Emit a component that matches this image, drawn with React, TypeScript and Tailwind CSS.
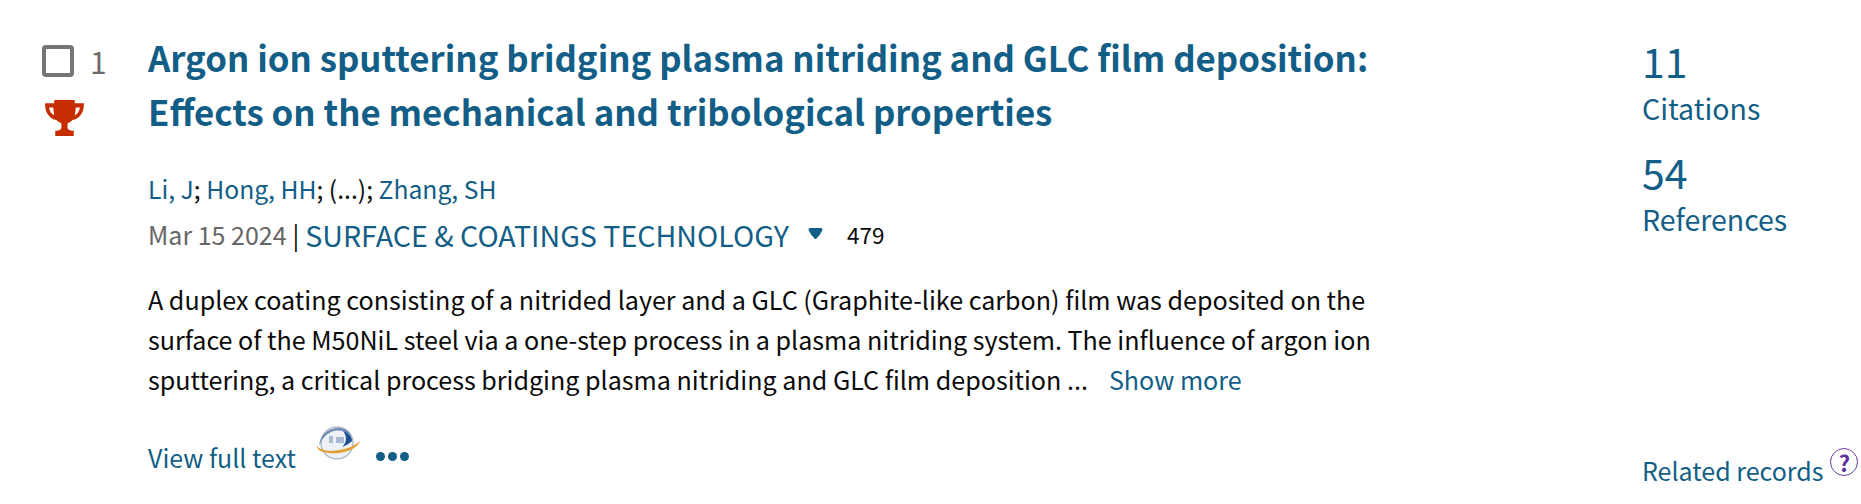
const font = { fontFamily: '"Noto Sans CJK SC", "Noto Sans", sans-serif' };

function Trophy() {
  return (
    <svg viewBox="0 0 40 36" className="w-[41px] h-[38px]" preserveAspectRatio="none" fill="#c62d00">
      <path d="M10 1h20v3h9c0 8-3 14-11 16-1.500 1.500-3.500 2.500-5 3v4c0 2 2 3 5 3h1v5H11v-5h1c3 0 5-1 5-3v-4c-1.500-.5-3.500-1.500-5-3C4 18 1 12 1 4h9V1zM5 8c.5 3.500 2 6 5 7.500C9.500 13 9.200 10.500 9 8H5zm30 0h-4c-.2 2.500-.5 5-1 7.500 3-1.500 4.500-4 5-7.500z" fillRule="evenodd" />
    </svg>
  );
}

function PublisherLogo() {
  return (
    <svg viewBox="0 0 44 36" className="w-[44px] h-[36px]">
      <circle cx="21" cy="17" r="16" fill="#eef2f7" stroke="#b4bcc9" strokeWidth="1.500" />
      <path d="M3 20C4 8 14 1 24 2c6 .5 10 4 11 8-5-5-13-7-20-4C9 9 5 14 3 20z" fill="#6d8db5" />
      <path d="M27 5c6 2 9 6 9 10-3 3-7 5-10 6 4-3 6-10 1-16z" fill="#1f4f94" />
      <path d="M1 19c1 5 12 7 22 5 9-1 17-5 21-9-1 5-9 10-20 12-11 1-20-1-22-4-1-1-1-3-1-4z" fill="#e3a032" />
      <rect x="13" y="10" width="4" height="7" fill="#a9bbd2" />
      <rect x="20" y="11" width="8" height="6" fill="#a9bbd2" />
    </svg>
  );
}

export default function App() {
  return (
    <div style={font} className="w-[1861px] h-[504px] bg-white flex overflow-hidden text-[#0a0a0a]">
      {/* checkbox + record number */}
      <div className="w-[148px] shrink-0 pl-[42px] pt-[45px] flex flex-col">
        <div className="flex items-center">
          <div className="w-[32px] h-[32px] rounded-[4px] border-[4px] border-[#757575]" />
          <span className="ml-[16px] text-[30px] leading-[32px] text-[#6b6b6b]">1</span>
        </div>
        <div className="mt-[22px] ml-[2px]">
          <Trophy />
        </div>
      </div>

      {/* record body */}
      <div className="w-[1239px] shrink-0 pt-[30px]">
        <div className="text-[34.800px] leading-[54px] font-semibold text-[#125e87] whitespace-nowrap">
          Argon ion sputtering bridging plasma nitriding and GLC film deposition:
          <br />
          Effects on the mechanical and tribological properties
        </div>
        <div className="mt-[33px] text-[24.700px] leading-[34px]">
          <span className="text-[#125e87]">Li, J</span>; <span className="text-[#125e87]">Hong, HH</span>; (...); <span className="text-[#125e87]">Zhang, SH</span>
        </div>
        <div className="mt-[12px] flex items-center h-[36px]">
          <span className="text-[25px] text-[#666666]">Mar 15 2024</span>
          <span className="text-[25px] ml-[6px]">|</span>
          <span className="text-[28.600px] text-[#125e87] ml-[6px]">SURFACE &amp; COATINGS TECHNOLOGY</span>
          <svg viewBox="0 0 16 12" className="w-[17px] h-[12px] ml-[18px] mb-[3px]" fill="#125e87">
            <path d="M1.500 3Q0 0 3 0h10q3 0 1.500 3Q12 8 9 10.500q-1 1-2 0Q4 8 1.500 3z" />
          </svg>
          <span className="text-[22.500px] ml-[23px]">479</span>
        </div>
        <div className="mt-[26px] text-[25.080px] leading-[40px] whitespace-nowrap">
          <div>A duplex coating consisting of a nitrided layer and a GLC (Graphite-like carbon) film was deposited on the</div>
          <div>surface of the M50NiL steel via a one-step process in a plasma nitriding system. The influence of argon ion</div>
          <div>
            sputtering, a critical process bridging plasma nitriding and GLC film deposition ...
            <span className="text-[#125e87] ml-[21px]">Show more</span>
          </div>
        </div>
        <div className="mt-[26px] flex items-center text-[25px] text-[#125e87]">
          <span className="mt-[14px]">View full text</span>
          <div className="ml-[20px] mb-[14px]">
            <PublisherLogo />
          </div>
          <div className="ml-[16px] mt-[12px] flex gap-[3px]">
            <div className="w-[9px] h-[9px] rounded-full bg-[#125e87]" />
            <div className="w-[9px] h-[9px] rounded-full bg-[#125e87]" />
            <div className="w-[9px] h-[9px] rounded-full bg-[#125e87]" />
          </div>
        </div>
      </div>

      {/* metrics */}
      <div className="ml-[255px] w-[218px] shrink-0 pt-[36px] flex flex-col text-[#125e87]">
        <div className="text-[41px] leading-[48px]">11</div>
        <div className="text-[28.500px] leading-[40px] mt-[4px]">Citations</div>
        <div className="text-[41px] leading-[48px] mt-[19px]">54</div>
        <div className="text-[28.500px] leading-[40px] mt-[4px] whitespace-nowrap">References</div>
        <div className="mt-[209px] flex items-start text-[25px] leading-[34px] whitespace-nowrap">
          <span className="mt-[5px]">Related records</span>
          <div className="ml-[7px] w-[28px] h-[28px] rounded-full border border-[#6b3fa0] flex items-center justify-center text-[22px] font-bold text-[#5b2d9c] shrink-0">?</div>
        </div>
      </div>
    </div>
  );
}
